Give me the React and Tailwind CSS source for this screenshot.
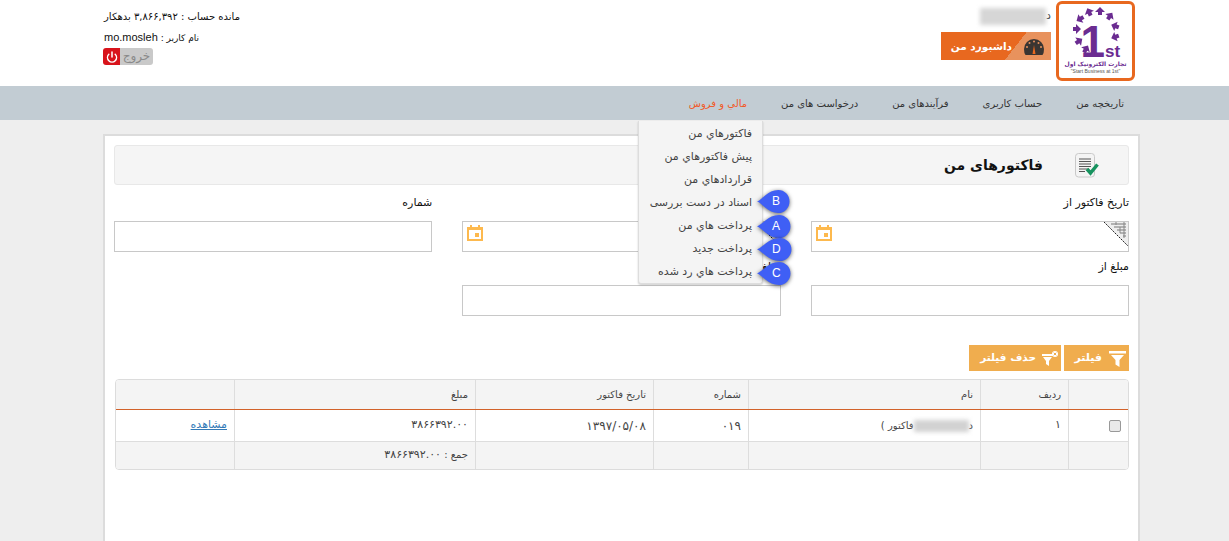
import React from "react";
import { Power } from "lucide-react";

// Small calendar icon used inside the date inputs
const CalendarIcon = () => (
  <svg width="16" height="16" viewBox="0 0 16 16" fill="#fdb94e">
    <path d="M3 0h2v3H3zM11 0h2v3h-2z" />
    <path fillRule="evenodd" d="M0 2h16v14H0zM2 5v9h12V5z" />
    <rect x="8" y="8" width="4" height="4" />
  </svg>
);

const FunnelIcon = () => (
  <svg width="17" height="17" viewBox="0 0 17 17" fill="white">
    <path d="M0 1h17v2.500H0zM2 5h13l-4.500 5v7l-4-2.500V10z" />
  </svg>
);

const FunnelXIcon = () => (
  <svg width="16" height="15" viewBox="0 0 16 15" fill="white">
    <path d="M0 3h11v2H0zM1 6h9l-3 4v5l-3-2v-3z" />
    <circle cx="13" cy="3" r="3" />
    <path d="M11.700 1.700l2.600 2.600M14.300 1.700l-2.600 2.600" stroke="#f0ad4e" strokeWidth="1" />
  </svg>
);

const GaugeIcon = () => (
  <svg width="20" height="16" viewBox="0 0 20 16">
    <path d="M0 10a10 10 0 0 1 20 0q0 4-1.500 6h-17Q0 14 0 10z" fill="#3a3532" />
    <path d="M10 6l-1.500 9h3z" fill="#e8681f" />
    <g fill="#e8925d">
      <circle cx="10" cy="2.500" r="1" />
      <circle cx="5.500" cy="4" r="1" />
      <circle cx="14.500" cy="4" r="1" />
      <circle cx="3" cy="8" r="1" />
      <circle cx="17" cy="8" r="1" />
    </g>
  </svg>
);

const DocIcon = () => (
  <svg width="24" height="25" viewBox="0 0 24 25">
    <rect x="0.500" y="0.500" width="19" height="23.500" rx="3" fill="#f4f4f4" stroke="#c9c9c9" />
    <path d="M4 6h12M4 8.500h12M4 11h12M4 13.500h12M4 16h9M4 18.500h6" stroke="#555" strokeWidth="1.200" />
    <path d="M12 16l3.500 4 7-8.500" fill="none" stroke="#17935f" strokeWidth="3.500" />
  </svg>
);

// Corner decoration on the date inputs
const CornerIcon = () => (
  <svg width="24" height="24" viewBox="0 0 24 24">
    <path d="M0 0h24v24z" fill="#eeeeee" />
    <path d="M0 0L24 24" stroke="#222" strokeWidth="1" strokeDasharray="2 1" />
    <path d="M7 2h15M10 5h12M13 8h9M16 11h6M19 14h3" stroke="#777" strokeWidth="1" />
    <path d="M12 0v3M20 0v16M16 5v6" stroke="#888" strokeWidth="1" />
  </svg>
);

const arrows = [
  { x: 41, y: 7, r: -90 },
  { x: 30, y: 8, r: -115 },
  { x: 51, y: 12, r: -55 },
  { x: 21, y: 15, r: 150 },
  { x: 56, y: 22, r: 200 },
  { x: 18, y: 25, r: 0 },
  { x: 56, y: 33, r: 160 },
  { x: 20, y: 37, r: -35 },
  { x: 27, y: 45, r: -60 },
];

const Logo = () => (
  <div className="flex h-[80px] w-[79px] flex-col items-center rounded-md border-[3px] border-[#e8681f] bg-white">
    <svg width="73" height="56" viewBox="0 0 73 56" className="shrink-0 overflow-visible">
      {arrows.map((a) => (
        <path key={a.x + "-" + a.y} transform={`translate(${a.x} ${a.y}) rotate(${a.r})`} d="M-4 -2h3v-3l5 5-5 5v-3h-3z" fill="#6b2c91" />
      ))}
      <text x="21.500" y="53" fontSize="44" fontWeight="bold" fill="#6b2c91" fontFamily="Liberation Sans, sans-serif">1</text>
      <text x="46" y="53" fontSize="17" fontWeight="bold" fill="#6b2c91" fontFamily="Liberation Sans, sans-serif">st</text>
    </svg>
    <div dir="rtl" className="text-[6px] leading-[8px] font-bold whitespace-nowrap text-[#6b2c91]">تجارت الکترونیک اول</div>
    <div className="text-[5px] leading-[6px] whitespace-nowrap text-[#555] [font-family:'Liberation_Sans',sans-serif]">"Start Business at 1st"</div>
  </div>
);

const Header = () => (
  <header className="flex h-[86px] justify-between bg-white pr-[94px] pl-[103px]">
    <div className="flex flex-col items-start pt-[11px]">
      <div dir="rtl" className="ml-px h-[20px] text-[10px] leading-[12px] text-[#111]">مانده حساب : ۳,۸۶۶,۳۹۲ بدهکار</div>
      <div dir="rtl" className="ml-px h-[17px] text-[9px] leading-[12px] text-[#111]">
        نام کاربر : <span className="text-[11px] [font-family:'Liberation_Sans',sans-serif]">mo.mosleh</span>
      </div>
      <div className="flex h-[17px] w-[50px] overflow-hidden rounded-[3px]">
        <div className="flex w-[17px] items-center justify-center bg-[#d8131b]">
          <Power size={12} color="white" strokeWidth={3} />
        </div>
        <div className="flex-1 bg-[#c9c9c9] text-center text-[12px] leading-[16px] text-[#8a8a8a]">خروج</div>
      </div>
    </div>
    <div className="flex gap-[5px] pt-[1px]">
      <div className="flex flex-col items-end pt-[6px]">
        <div className="flex h-[19px] items-center">
          <div className="h-[17px] w-[66px] bg-[#d6d6d6] blur-[2px]"></div>
          <span className="text-[11px] text-[#444]">د</span>
        </div>
        <div className="mt-[6px] flex h-[28px] w-[110px] [background-image:linear-gradient(128deg,#e8681f_0,#e8681f_65%,#e8925d_65%,#e8925d_100%)]">
          <div dir="rtl" className="w-[71px] pt-[6px] text-left text-[10.500px] leading-[16px] font-bold whitespace-nowrap text-white"><span className="ml-[10px] inline-block">داشبورد من</span></div>
          <div className="ml-auto pt-[7px] pr-[7px]"><GaugeIcon /></div>
        </div>
      </div>
      <Logo />
    </div>
  </header>
);

const Nav = () => (
  <nav dir="rtl" className="relative z-10 flex h-[34px] items-center gap-[34px] bg-[#c2ccd3] pr-[105px] text-[10px] text-[#333]">
    <span>تاریخچه من</span>
    <span>حساب کاربری</span>
    <span>فرآیندهای من</span>
    <span>درخواست های من</span>
    <span className="text-[#f15a29]">مالي و فروش</span>
    <Menu />
  </nav>
);

const menuItems = [
  { label: "فاکتورهاي من" },
  { label: "پیش فاکتورهاي من" },
  { label: "قراردادهاي من" },
  { label: "اسناد در دست بررسی", badge: "B", w: 33, top: -1 },
  { label: "پرداخت هاي من", badge: "A", w: 34, top: 1 },
  { label: "پرداخت جدید", badge: "D", w: 35, top: 1 },
  { label: "پرداخت هاي رد شده", badge: "C", w: 34, top: 2 },
];

// Blue callout that points at a menu row
const Badge = ({ letter, width, top }) => (
  <div className="absolute left-[118px] flex h-[23px] items-center" style={{ width, top }}>
    <svg viewBox="0 0 34 23" preserveAspectRatio="none" className="absolute inset-0 h-full w-full drop-shadow-[0_1px_2px_rgba(0,0,0,0.6)]">
      <path d="M0 11.500C5 10 11 0 22 0a11.500 11.500 0 0 1 0 23C11 23 5 13 0 11.500z" fill="#3f5ff5" />
    </svg>
    <span dir="ltr" className="relative w-full pl-[15px] text-left text-[12px] text-white [font-family:'Liberation_Sans',sans-serif]">{letter}</span>
  </div>
);

const Menu = () => (
  <div className="absolute top-[35px] left-[638px] w-[125px] rounded-b-[3px] border-r border-b border-l border-[#ddd] bg-[#f4f4f4] pt-[1px] shadow-[0_1px_2px_rgba(0,0,0,0.2)]">
    {menuItems.map((item) => (
      <div key={item.label} className="relative h-[23px] pr-[10px] text-right text-[11px] leading-[23px] whitespace-nowrap text-[#444]">
        {item.label}
        {item.badge && <Badge letter={item.badge} width={item.w} top={item.top} />}
      </div>
    ))}
  </div>
);

const Field = ({ label, icon, corner }) => (
  <div>
    <div dir="rtl" className="h-[26px] text-[11px] leading-[16px] text-[#111]">{label}</div>
    <div className="relative h-[31px] border border-[#c8c8c8] bg-white">
      {icon && <div className="pt-[3px] pl-[4px]"><CalendarIcon /></div>}
      {corner && <div className="absolute top-0 right-0"><CornerIcon /></div>}
    </div>
  </div>
);

const colClasses = ["w-[60px]", "w-[88px]", "w-[232px]", "w-[95px]", "w-[178px]", "w-[241px]", "w-[118px]"];

const Row = ({ cells, className }) => (
  <div dir="rtl" className={`flex text-[10px] text-[#444] ${className}`}>
    {cells.map((c, i) => (
      <div key={i} className={`${colClasses[i]} flex items-center border-l border-[#ddd] px-[7px] last:border-l-0`}>{c}</div>
    ))}
  </div>
);

const Digits = ({ children }) => <span className="text-[11px] tracking-[1px]">{children}</span>;

const Table = () => (
  <div className="mt-[8px] ml-[1px] overflow-hidden rounded-[4px] border border-[#dcdcdc]">
    <Row className="h-[29px] bg-[#f4f4f4] text-[#333]" cells={["", "ردیف", "نام", "شماره", "تاریخ فاکتور", "مبلغ", ""]} />
    <div className="h-[1px] bg-[#d2622a]"></div>
    <Row
      className="h-[31px] bg-white"
      cells={[
        <div className="h-[12px] w-[12px] rounded-[2px] border border-[#999] bg-[#e9e9e9]"></div>,
        <Digits>۱</Digits>,
        <span className="flex items-center whitespace-nowrap">
          <span>د</span>
          <span className="h-[12px] w-[55px] bg-[#d2d2d2] blur-[2px]"></span>
          <span>فاکتور )</span>
        </span>,
        <span className="text-[12px] tracking-[2px]">۰۱۹</span>,
        <span className="text-[12px] tracking-[3px]" dir="ltr">۱۳۹۷/۰۵/۰۸</span>,
        <Digits>۳۸۶۶۳۹۲.۰۰</Digits>,
        <a href="#" className="text-[11px] text-[#337ab7] underline">مشاهده</a>,
      ]}
    />
    <div className="h-[1px] bg-[#ddd]"></div>
    <Row className="h-[27px] bg-[#f4f4f4]" cells={["", "", "", "", "", <span className="whitespace-nowrap">جمع : <Digits>۳۸۶۶۳۹۲.۰۰</Digits></span>, ""]} />
  </div>
);

const App = () => {
  return (
    <div className="flex h-screen flex-col overflow-hidden bg-[#eeeeee] [font-family:'DejaVu_Sans',sans-serif]">
      <Header />
      <Nav />
      <main className="mt-[14px] ml-[103px] w-[1037px] flex-1 border-2 border-b-0 border-[#dcdcdc] bg-white px-[9px] pt-[9px]">
        <div dir="rtl" className="flex h-[40px] items-center gap-[32px] rounded-[3px] border border-[#e8e8e8] bg-[#f5f5f5] pr-[29px]">
          <DocIcon />
          <h1 className="text-[14px] leading-none font-bold text-[#111]">فاکتورهای من</h1>
        </div>
        <div className="mt-[10px] grid grid-cols-3 gap-x-[30px] gap-y-[7px]">
          <Field label="شماره" />
          <Field label="تا" icon corner />
          <Field label="تاریخ فاکتور از" icon corner />
          <div></div>
          <Field label="مبلغ تا" />
          <Field label="مبلغ از" />
        </div>
        <div dir="rtl" className="mt-[29px] flex gap-[3px]">
          <button className="flex h-[26px] w-[65px] items-center gap-[7px] bg-[#f0ad4e] pr-[3px] text-[11px] font-bold text-white"><FunnelIcon /> فیلتر</button>
          <button className="flex h-[26px] w-[92px] items-center gap-[6px] bg-[#f0ad4e] pr-[3px] text-[10.500px] font-bold text-white"><FunnelXIcon /> حذف فیلتر</button>
        </div>
        <Table />
      </main>
    </div>
  );
};

export default App;
